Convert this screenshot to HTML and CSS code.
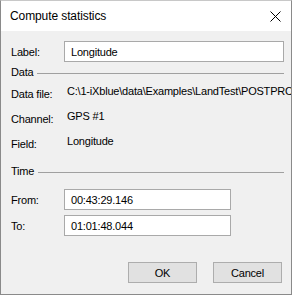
FILE: index.html
```html
<!DOCTYPE html>
<html>
<head>
<meta charset="utf-8">
<link rel="stylesheet" href="styles.css">
</head>
<body>
<div class="window">
  <div class="titlebar">
    <span class="title">Compute statistics</span>
    <svg class="close" width="11" height="11" viewBox="0 0 11 11"><path d="M0.5 0.5 L10.5 10.5 M10.5 0.5 L0.5 10.5" stroke="#000" stroke-width="1" fill="none"/></svg>
  </div>
  <div class="content">
    <div class="row input-row">
      <span class="lbl">Label:</span>
      <div class="input wide">Longitude</div>
    </div>
    <div class="group first">
      <span class="group-title">Data</span>
      <span class="rule"></span>
    </div>
    <div class="row info">
      <span class="lbl">Data file:</span>
      <span class="val">C:\1-iXblue\data\Examples\LandTest\POSTPRC</span>
    </div>
    <div class="row info">
      <span class="lbl">Channel:</span>
      <span class="val">GPS #1</span>
    </div>
    <div class="row info">
      <span class="lbl">Field:</span>
      <span class="val">Longitude</span>
    </div>
    <div class="group second">
      <span class="group-title">Time</span>
      <span class="rule"></span>
    </div>
    <div class="row input-row from">
      <span class="lbl">From:</span>
      <div class="input short">00:43:29.146</div>
    </div>
    <div class="row input-row to">
      <span class="lbl">To:</span>
      <div class="input short">01:01:48.044</div>
    </div>
    <div class="buttons">
      <button class="btn">OK</button>
      <button class="btn">Cancel</button>
    </div>
  </div>
</div>
</body>
</html>
```
FILE: styles.css
```css
html, body {
  margin: 0;
  padding: 0;
  background: #f0f0f0;
}
.window {
  width: 292px;
  height: 295px;
  box-sizing: border-box;
  border: 1px solid #8a8a8a;
  border-top-color: #c8c8c8;
  background: #f0f0f0;
  font-family: "Liberation Sans", Arial, sans-serif;
  font-size: 11px;
  letter-spacing: -0.2px;
  color: #000;
  overflow: hidden;
}
.titlebar {
  height: 30px;
  background: #fff;
  display: flex;
  align-items: center;
  justify-content: space-between;
  padding: 0 10px 0 9px;
}
.title {
  font-size: 12px;
  letter-spacing: -0.1px;
  color: #000;
}
.close {
  display: block;
}
.content {
  padding: 10px 7px 0 10px;
  display: flex;
  flex-direction: column;
}
.row {
  display: flex;
  align-items: center;
}
.lbl {
  width: 53px;
  flex: none;
  color: #000;
}
.input-row {
  height: 21px;
}
.input {
  height: 21px;
  box-sizing: border-box;
  border: 1px solid #a9a9a9;
  background: #fff;
  padding: 0 6px;
  display: flex;
  align-items: center;
  white-space: nowrap;
}
.wide { width: 220px; }
.short { width: 167px; }
.group {
  display: flex;
  align-items: center;
  height: 18px;
}
.group.first { margin-top: 1px; }
.group.second { margin-top: 6px; }
.group-title { margin-right: 4px; }
.rule {
  flex: 1;
  height: 1px;
  background: #a0a0a0;
  margin-top: 2px;
}
.info {
  height: 25px;
}
.val {
  padding-left: 3px;
  padding-bottom: 5px;
  white-space: nowrap;
}
.from { margin-top: 9px; }
.to { margin-top: 5px; }
.buttons {
  display: flex;
  justify-content: flex-end;
  gap: 16px;
  margin-top: 26px;
  margin-right: 2px;
}
.btn {
  width: 69px;
  height: 21px;
  box-sizing: border-box;
  background: #e1e1e1;
  border: 1px solid #adadad;
  font-family: "Liberation Sans", Arial, sans-serif;
  font-size: 11px;
  letter-spacing: -0.2px;
  color: #000;
  padding: 0;
}
```
